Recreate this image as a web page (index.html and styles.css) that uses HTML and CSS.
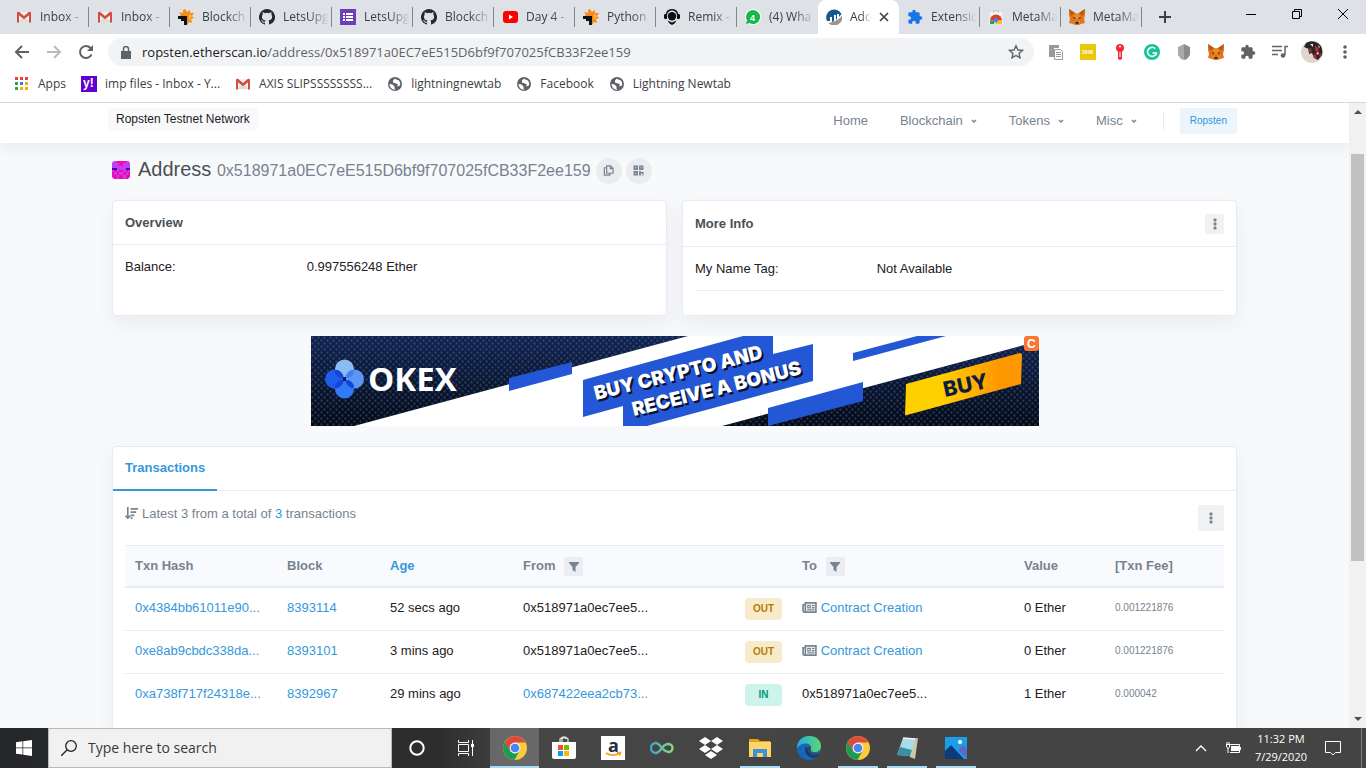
FILE: index.html
```html
<!DOCTYPE html>
<html lang="en">
<head>
<meta charset="utf-8">
<title>Address 0x518971a0EC7eE515D6bf9f707025fCB33F2ee159</title>
<link rel="stylesheet" href="styles.css">
</head>
<body>
<svg class="sprite" aria-hidden="true">
  <symbol id="gmail" viewBox="0 0 16 16"><path fill="#f2f2f2" d="M2 3h12v10H2z"/><path fill="#dcdcdc" d="M8 8l6 5H2z"/><path fill="#d54b3d" d="M1 13.500h2V6.200l5 4 5-4v7.300h2V4a1.400 1.400 0 0 0-2.300-1L8 7 3.300 3A1.400 1.400 0 0 0 1 4z"/></symbol>
  <symbol id="letsup" viewBox="0 0 16 16"><path fill="#f58a1f" d="M7 0l2 3 3-2v3l4 0-2 3 2 2-3 1 1 4-3-1-2 3-1-3H7V8H0l3-2-2-3 4 1 0-3z"/><path fill="#ffc235" d="M11 5l3 2-3 4z"/><path fill="#111" d="M0 7h9v9H6v-4H3v-2H0z"/></symbol>
  <symbol id="github" viewBox="0 0 16 16"><path fill="#24292e" d="M8 0a8 8 0 0 0-2.530 15.590c.4.070.550-.170.550-.380v-1.490c-2.010.370-2.530-.490-2.690-.940-.090-.230-.480-.940-.820-1.130-.280-.150-.680-.520-.010-.530.630-.010 1.080.580 1.230.820.720 1.210 1.870.870 2.330.660.070-.520.280-.870.510-1.070-1.780-.200-3.640-.890-3.640-3.950 0-.870.310-1.590.820-2.150-.080-.200-.360-1.020.080-2.120 0 0 .670-.210 2.200.820a7.600 7.600 0 0 1 4 0c1.530-1.040 2.200-.820 2.200-.820.440 1.100.160 1.920.080 2.120.510.560.820 1.270.820 2.150 0 3.070-1.870 3.750-3.650 3.950.290.250.540.730.540 1.480v2.200c0 .210.150.460.550.380A8 8 0 0 0 8 0z"/></symbol>
  <symbol id="form" viewBox="0 0 16 16"><path fill="#6b3fb8" d="M0 0h16v16H0z"/><path fill="#fff" d="M3 4h2v2H3zm3 0h7v2H6zM3 7h2v2H3zm3 0h7v2H6zM3 10h2v2H3zm3 0h7v2H6z"/></symbol>
  <symbol id="youtube" viewBox="0 0 16 16"><rect x="1" y="2" width="15" height="12" rx="3" fill="#f00"/><path fill="#fff" d="M7 5.500v5L11 8z"/></symbol>
  <symbol id="remix" viewBox="0 0 16 16"><path fill="#111" d="M8 0a6.500 6.500 0 0 0-6.300 5A2.500 2.500 0 0 0 1.500 10H3V6.500a5 5 0 0 1 10 0V10h1.500a2.500 2.500 0 0 0-.2-5A6.500 6.500 0 0 0 8 0z"/><circle cx="8" cy="7.300" r="4.200" fill="#111"/><path fill="#111" d="M3.500 11.500L8 13.500l4.500-2-2 3L8 16l-2.500-1.500z"/></symbol>
  <symbol id="etherscan" viewBox="0 0 16 16"><path fill="#15598c" d="M1 12A8 8 0 1 1 15.500 5L13 8V5h-2v5l-1 1V6H8v6l-2 1V8H4v4z"/><path fill="#979695" d="M2.500 14C8 13 13 11 16 6.500A8 8 0 0 1 2.500 14z"/></symbol>
  <symbol id="puzzle" viewBox="0 0 24 24"><path d="M20.500 11H19V7a2 2 0 0 0-2-2h-4V3.500a2.500 2.500 0 0 0-5 0V5H4a2 2 0 0 0-2 2v3.800h1.500a2.700 2.700 0 0 1 0 5.400H2V20a2 2 0 0 0 2 2h3.800v-1.500a2.700 2.700 0 0 1 5.400 0V22H17a2 2 0 0 0 2-2v-4h1.500a2.500 2.500 0 0 0 0-5z"/></symbol>
  <symbol id="webstore" viewBox="0 0 16 16"><path fill="#f4f5f6" d="M2 3h12l1 12H1z"/><path fill="none" stroke="#c6c9cd" d="M5.500 4V1.500h5V4"/><path fill="#e33b2e" d="M2 11.500a6 6 0 0 1 12 0z"/><path fill="#2f9e4f" d="M2 11.500h5L6 15H2z"/><path fill="#fbc116" d="M14 11.500H9L7 15h7z"/><path fill="#4285f4" d="M5.500 11.500a2.500 2.500 0 0 1 5 0L8 14z"/></symbol>
  <symbol id="fox" viewBox="0 0 16 16"><path fill="#e2761b" d="M0 0l6 4h4l6-4v6l-1 4 1 4-4 1-2 1H6l-2-1-4-1 1-4-1-4z"/><path fill="#b85a14" d="M0 0l6 4-4 3zM16 0l-6 4 4 3z"/><path fill="#f08b2d" d="M6 4h4l1 6H5z"/><path fill="#3b2b20" d="M4 8l3 1-2 1zM12 8l-3 1 2 1zM6 13h4l-1 2H7z"/><path fill="#d7c1b3" d="M5 12l1 1-1 1zm6 0l-1 1 1 1z"/></symbol>
  <symbol id="globe" viewBox="0 0 16 16"><circle cx="8" cy="8" r="7" fill="#5f6368"/><path fill="#fff" d="M8 2.500l-2 2v2l3 1 2 1-1 2 3-1c1-3-1-6-4-6zM2.500 8l3 .500 2 2v2l1 1.200C5 14 2.500 11 2.500 8z"/></symbol>
  <symbol id="chrome" viewBox="0 0 22 22"><circle cx="11" cy="11" r="11" fill="#fbcb3c"/><path fill="#de4b3c" d="M1.500 5.500a11 11 0 0 1 19 0L20.800 6H11L6 14z"/><path fill="#1c9b55" d="M1.500 5.500A11 11 0 0 0 10.500 22L15.500 13 11 16 6.500 14z"/><circle cx="11" cy="11" r="5" fill="#f5f5f5"/><circle cx="11" cy="11" r="4" fill="#4a86f0"/></symbol>
  <symbol id="dots" viewBox="0 0 16 16"><circle cx="8" cy="3" r="1.800"/><circle cx="8" cy="8" r="1.800"/><circle cx="8" cy="13" r="1.800"/></symbol>
  <symbol id="dots-tight" viewBox="0 0 12 12"><rect x="4.500" y="0.500" width="3" height="3" rx="1"/><rect x="4.500" y="4.500" width="3" height="3" rx="1"/><rect x="4.500" y="8.500" width="3" height="3" rx="1"/></symbol>
  <symbol id="funnel" viewBox="0 0 10 10"><path d="M0 0h10v1L6.500 5v5L3.500 8V5L0 1z"/></symbol>
  <symbol id="caret" viewBox="0 0 6 6"><path fill="none" stroke="currentColor" stroke-width="1.400" d="M1 2l2 2 2-2"/></symbol>
  <symbol id="news" viewBox="0 0 16 12"><path fill="none" stroke="currentColor" stroke-width="1.800" d="M3.500 1H15v10H2A1.300 1.300 0 0 1 1 10V3h2.500zM3.500 3v7"/><path fill="currentColor" d="M5.500 3h4v4h-4zM10.500 3h3v1.500h-3zM10.500 5.500h3V7h-3zM5.500 8h8v1.200h-8z"/><path fill="#fff" d="M6.700 4.300h1.500v1.400H6.700z"/></symbol>
</svg>

<header class="tabs">
  <div class="tab"><svg class="i16"><use href="#gmail"/></svg><span class="title">Inbox -</span></div>
  <div class="tab"><svg class="i16"><use href="#gmail"/></svg><span class="title">Inbox -</span></div>
  <div class="tab"><svg class="i16"><use href="#letsup"/></svg><span class="title">Blockch</span></div>
  <div class="tab"><svg class="i16"><use href="#github"/></svg><span class="title">LetsUpg</span></div>
  <div class="tab"><svg class="i16"><use href="#form"/></svg><span class="title">LetsUpg</span></div>
  <div class="tab"><svg class="i16"><use href="#github"/></svg><span class="title">Blockch</span></div>
  <div class="tab"><svg class="i16"><use href="#youtube"/></svg><span class="title">Day 4 -</span></div>
  <div class="tab"><svg class="i16"><use href="#letsup"/></svg><span class="title">Python</span></div>
  <div class="tab"><svg class="i16"><use href="#remix"/></svg><span class="title">Remix -</span></div>
  <div class="tab before-active"><svg class="i16" viewBox="0 0 16 16"><circle cx="8" cy="8" r="8" fill="#fff"/><path fill="#14b84c" d="M8 1a7 7 0 0 0-6 10.500L1 15l3.500-1A7 7 0 1 0 8 1z"/><text x="5" y="12" class="wa-count">4</text></svg><span class="title">(4) Wha</span></div>
  <div class="tab active"><svg class="i16"><use href="#etherscan"/></svg><span class="title">Add</span><button class="close" aria-label="Close tab"><svg viewBox="0 0 10 10"><path d="M1 1l8 8M9 1L1 9"/></svg></button></div>
  <div class="tab"><svg class="i16 blue"><use href="#puzzle"/></svg><span class="title">Extensic</span></div>
  <div class="tab"><svg class="i16"><use href="#webstore"/></svg><span class="title">MetaMa</span></div>
  <div class="tab"><svg class="i16"><use href="#fox"/></svg><span class="title">MetaMa</span></div>
  <button class="new-tab" aria-label="New tab"><svg viewBox="0 0 12 12"><path d="M6 0v12M0 6h12"/></svg></button>
  <div class="window-buttons">
    <button aria-label="Minimize"><svg viewBox="0 0 10 10"><path d="M0 5.500h10"/></svg></button>
    <button aria-label="Restore"><svg viewBox="0 0 10 10"><path d="M.5 2.500h7v7h-7zM2.500 2.500v-2h7v7h-2"/></svg></button>
    <button aria-label="Close"><svg viewBox="0 0 10 10"><path d="M0 0l10 10M10 0L0 10"/></svg></button>
  </div>
</header>

<nav class="toolbar">
  <button aria-label="Back"><svg class="nav" viewBox="0 0 16 16"><path d="M15 8H2M8 2L2 8l6 6"/></svg></button>
  <button aria-label="Forward"><svg class="nav faint" viewBox="0 0 16 16"><path d="M1 8h13M8 2l6 6-6 6"/></svg></button>
  <button aria-label="Reload"><svg class="nav" viewBox="0 0 16 16"><path d="M13.500 10.500A6 6 0 1 1 12.500 4L14 5.500"/><path class="solid" d="M15 1v6H9z"/></svg></button>
  <div class="omnibox">
    <svg class="lock" viewBox="0 0 10 13"><path fill="#5f6368" d="M0 5h10v8H0z"/><path fill="none" stroke="#5f6368" stroke-width="1.500" d="M2.500 5V3a2.500 2.500 0 0 1 5 0v2"/></svg>
    <div class="url" role="textbox" aria-label="Address bar" contenteditable="true" spellcheck="false"><span class="host">ropsten.etherscan.io</span>/address/0x518971a0EC7eE515D6bf9f707025fCB33F2ee159</div>
    <button aria-label="Bookmark this page"><svg class="i16" viewBox="0 0 16 16"><path fill="none" stroke="#5f6368" stroke-width="1.400" d="M8 1.800l1.900 4.200 4.500.400-3.400 3 1 4.500L8 11.500 4 13.900l1-4.500-3.400-3 4.500-.400z"/></svg></button>
  </div>
  <div class="extensions">
    <button aria-label="Clipboard"><svg class="i16" viewBox="0 0 16 16"><path fill="#9a9a9a" d="M1 1h10v3H6v9H1z"/><path fill="#fff" stroke="#9a9a9a" d="M6.500 5.500h6l2 2v8h-8z"/><path stroke="#9a9a9a" d="M8 8.500h5M8 10.500h5M8 12.500h5"/></svg></button>
    <button aria-label="2048"><svg class="i16" viewBox="0 0 16 16"><rect width="16" height="16" rx="1" fill="#edc60a"/><text x="2" y="10" class="t2048">2048</text></svg></button>
    <button aria-label="Key"><svg class="i16" viewBox="0 0 16 16"><circle cx="8" cy="4" r="4" fill="#ee2c3c"/><path fill="#ee2c3c" d="M6 6h4v9l-2 1-2-1z"/><circle cx="8" cy="2.500" r="1" fill="#fff"/><path stroke="#fff" d="M8 8v5"/></svg></button>
    <button aria-label="Grammarly"><svg class="i16" viewBox="0 0 16 16"><circle cx="8" cy="8" r="8" fill="#15c39a"/><path fill="none" stroke="#fff" stroke-width="1.600" d="M11.300 4.700A4.500 4.500 0 1 0 12.400 9H8.500M12 8.500v3"/></svg></button>
    <button aria-label="Shield"><svg class="i16" viewBox="0 0 16 16"><path fill="#a9a9a9" d="M8 0L2 3v8l3 4 3 1z"/><path fill="#8c8c8c" d="M8 0l6 3v8l-3 4-3 1z"/></svg></button>
    <button aria-label="MetaMask"><svg class="i16"><use href="#fox"/></svg></button>
    <button aria-label="Extensions"><svg class="i16 grey"><use href="#puzzle"/></svg></button>
    <button aria-label="Media"><svg class="i16" viewBox="0 0 16 16"><path stroke="#5f6368" stroke-width="1.500" fill="none" d="M0 2.500h10M0 6.500h10M0 10.500h6M13 11V2.500h3"/><circle cx="11" cy="11.500" r="2.300" fill="#5f6368"/></svg></button>
    <button aria-label="Profile"><svg class="avatar" viewBox="0 0 22 22"><circle cx="11" cy="11" r="11" fill="#dcd6cd"/><path fill="#2a2628" d="M5 2a11 11 0 0 1 15 3q2 5 1 9l-4 5-4-2-2-5-3 1 0-5-5-2z"/><path fill="#c1262d" d="M14 5l4 2-1 4-3-1zM12 14l3-1 1 4-2 1zM18 13l3-1-2 4z"/><path fill="#e9e4e0" d="M9 3l3 0 0 3zM15 12l3-1-1 3zM17 4l2 2-1 1z"/><path fill="#7d3350" d="M7 8l3-1 1 4-3 1z"/></svg></button>
    <button class="menu" aria-label="Menu"><svg class="i16 grey"><use href="#dots"/></svg></button>
  </div>
</nav>

<nav class="bookmarks">
  <a href="#"><svg class="i16" viewBox="0 0 16 16"><path fill="#ea4335" d="M1 1h3v3H1zm5 0h3v3H6zm5 0h3v3h-3z"/><path fill="#34a04f" d="M1 6h3v3H1zm0 5h3v3H1z"/><path fill="#2a7ff0" d="M6 6h3v3H6z"/><path fill="#f9ab00" d="M11 6h3v3h-3zm-5 5h3v3H6zm5 0h3v3h-3z"/></svg>Apps</a>
  <a href="#"><svg class="i16" viewBox="0 0 16 16"><path fill="#6001d2" d="M0 0h16v16H0z"/><text x="2" y="11" class="yahoo">y!</text></svg>imp files - Inbox - Y...</a>
  <a href="#"><svg class="i16"><use href="#gmail"/></svg>AXIS SLIPSSSSSSSS...</a>
  <a href="#"><svg class="i16"><use href="#globe"/></svg>lightningnewtab</a>
  <a href="#"><svg class="i16"><use href="#globe"/></svg>Facebook</a>
  <a href="#"><svg class="i16"><use href="#globe"/></svg>Lightning Newtab</a>
</nav>

<div class="viewport">
  <div class="page">
    <header class="site-header">
      <div class="container">
        <span class="network">Ropsten Testnet Network</span>
        <nav class="site-nav">
          <a href="#">Home</a>
          <a href="#">Blockchain <svg class="caret"><use href="#caret"/></svg></a>
          <a href="#">Tokens <svg class="caret"><use href="#caret"/></svg></a>
          <a href="#">Misc <svg class="caret"><use href="#caret"/></svg></a>
          <span class="divider"></span>
          <a class="chain" href="#">Ropsten</a>
        </nav>
      </div>
    </header>

    <main class="container">
      <div class="heading">
        <svg class="identicon" viewBox="0 0 8 8" preserveAspectRatio="none" shape-rendering="crispEdges"><path fill="#c23cf5" d="M0 0h8v8H0z"/><path fill="#f507a8" d="M2 0h4v1H5v1H3V1H2zM1 4h1v1H1zm2 0h2v1H3zm3 0h1v1H6zM0 5h1v1h1v1H0zM2 5h1v1H2zm3 0h1v1H5zm2 0h1v2H6V6h1zM3 6h2v1H3zM1 7h1v1H1zm2 0h2v1H3zm3 0h1v1H6z"/><path fill="#3a0ba5" d="M0 3h2v1H0zm6 0h2v1H6z"/></svg>
        <h1>Address <span class="hash">0x518971a0EC7eE515D6bf9f707025fCB33F2ee159</span></h1>
        <button class="round" aria-label="Copy address"><svg viewBox="0 0 12 12"><path fill="none" stroke="currentColor" stroke-width="1.300" d="M4 1h4l3 2.500V9H4zM4 3H1.500v8h6V9M8 1v3h3"/></svg></button>
        <button class="round" aria-label="QR code"><svg viewBox="0 0 12 12"><path fill="none" stroke="currentColor" stroke-width="1.800" d="M1.500 1.500h3v3h-3zM7.500 1.500h3v3h-3zM1.500 7.500h3v3h-3z"/><path fill="currentColor" d="M6.600 6.600h2v1h3v2.400h-2V9h-1v2.400h-2zM10 10.500h1.500v1H10z"/></svg></button>
      </div>

      <div class="cards">
        <section class="card">
          <h2>Overview</h2>
          <dl><dt>Balance:</dt><dd>0.997556248 Ether</dd></dl>
        </section>
        <section class="card">
          <h2 class="with-menu">More Info <button class="small-dots" aria-label="More options"><svg><use href="#dots-tight"/></svg></button></h2>
          <dl class="ruled"><dt>My Name Tag:</dt><dd>Not Available</dd></dl>
        </section>
      </div>

      <a class="ad" href="#">
        <svg viewBox="0 0 728 90" role="img" aria-label="OKEX banner">
          <defs>
            <linearGradient id="night" x2="0" y2="1"><stop stop-color="#102452"/><stop offset="1" stop-color="#030916"/></linearGradient>
            <linearGradient id="gold"><stop offset=".3" stop-color="#ffd000"/><stop offset=".8" stop-color="#ff9800"/></linearGradient>
            <pattern id="mesh" width="6" height="6" patternUnits="userSpaceOnUse"><g fill="#8093b8" opacity=".28"><circle cx="1.500" cy="1.500" r="1.200"/><circle cx="4.500" cy="4.500" r="1.200"/></g></pattern>
          </defs>
          <path fill="#fff" d="M0 0h728v90H0z"/>
          <path fill="url(#night)" d="M0 0h377L43 90H0zM411 90L728 5v85z"/>
          <path fill="url(#mesh)" d="M0 0h377L43 90H0zM411 90L728 5v85z"/>
          <path fill="#2457d6" d="M198 42l63-16v12l-63 17zM272 44L432 0h30v18l40-10v37L336 90h-24V70l-40 11zM542 17l64-17h29l-93 25zM457 72l95-26v19l-95 25z"/>
          <circle cx="33.500" cy="33" r="9.500" fill="#8abcf5"/><circle cx="43.500" cy="43" r="9.500" fill="#5b96f2"/><circle cx="33.500" cy="53" r="9.500" fill="#3279f5"/><circle cx="23.500" cy="43" r="9.500" fill="#1e5cec"/>
          <g fill="#1742d8"><ellipse cx="28" cy="38" rx="5" ry="2.500" transform="rotate(45 28 38)"/><ellipse cx="39" cy="38" rx="5" ry="2.500" transform="rotate(-45 39 38)" fill="#3f82ee"/><ellipse cx="28" cy="48" rx="5" ry="2.500" transform="rotate(-45 28 48)"/><ellipse cx="39" cy="48" rx="5" ry="2.500" transform="rotate(45 39 48)"/></g>
          <path fill="#0b1c42" d="M32 41h3v4h-3z"/>
          <text class="okex" x="57" y="55">OKEX</text>
          <text class="slogan shade" transform="rotate(-14 287 66)" x="287" y="66">BUY CRYPTO AND</text>
          <text class="slogan" transform="rotate(-14 285 64)" x="285" y="64">BUY CRYPTO AND</text>
          <text class="slogan shade" transform="rotate(-14 325 82)" x="325" y="82">RECEIVE A BONUS</text>
          <text class="slogan" transform="rotate(-14 323 80)" x="323" y="80">RECEIVE A BONUS</text>
          <path fill="url(#gold)" d="M595 48l114-31q2 0 2 2l-1 29-114 31q-2 1-2-1l1-28z"/>
          <text class="buy" transform="rotate(-12 634 61)" x="634" y="61">BUY</text>
          <rect x="713" y="0" width="15" height="15" rx="3" fill="#fb7535"/>
          <text class="badge-c" x="716" y="12">C</text>
        </svg>
      </a>

      <section class="card transactions">
        <div class="tab-row"><a href="#">Transactions</a></div>
        <div class="summary">
          <p><svg class="sort" viewBox="0 0 14 14"><path fill="none" stroke="currentColor" stroke-width="1.800" d="M3 0v12M0.500 9.500L3 12l2.500-2.500M6 2h8M6 5.500h6M6 9h4M6 12h2"/></svg> <span>Latest 3 from a total of <a href="#">3</a> transactions</span></p>
          <button class="big-dots" aria-label="Table options"><svg><use href="#dots-tight"/></svg></button>
        </div>
        <table>
          <colgroup><col class="c-hash"><col class="c-block"><col class="c-age"><col class="c-from"><col class="c-dir"><col class="c-to"><col class="c-value"><col class="c-fee"></colgroup>
          <thead><tr><th>Txn Hash</th><th>Block</th><th><a href="#">Age</a></th><th>From <button class="filter" aria-label="Filter from"><svg><use href="#funnel"/></svg></button></th><th></th><th>To <button class="filter" aria-label="Filter to"><svg><use href="#funnel"/></svg></button></th><th>Value</th><th>[Txn Fee]</th></tr></thead>
          <tbody>
            <tr><td><a href="#">0x4384bb61011e90...</a></td><td><a href="#">8393114</a></td><td>52 secs ago</td><td>0x518971a0ec7ee5...</td><td><span class="dir out">OUT</span></td><td><svg class="news"><use href="#news"/></svg> <a href="#">Contract Creation</a></td><td>0 Ether</td><td class="fee">0.001221876</td></tr>
            <tr><td><a href="#">0xe8ab9cbdc338da...</a></td><td><a href="#">8393101</a></td><td>3 mins ago</td><td>0x518971a0ec7ee5...</td><td><span class="dir out">OUT</span></td><td><svg class="news"><use href="#news"/></svg> <a href="#">Contract Creation</a></td><td>0 Ether</td><td class="fee">0.001221876</td></tr>
            <tr><td><a href="#">0xa738f717f24318e...</a></td><td><a href="#">8392967</a></td><td>29 mins ago</td><td><a href="#">0x687422eea2cb73...</a></td><td><span class="dir in">IN</span></td><td>0x518971a0ec7ee5...</td><td>1 Ether</td><td class="fee">0.000042</td></tr>
          </tbody>
        </table>
      </section>
    </main>
  </div>
  <div class="scrollbar"><svg viewBox="0 0 8 4"><path d="M0 4h8L4 0z"/></svg><div class="track"><div class="thumb"></div></div><svg viewBox="0 0 8 4"><path d="M0 0h8L4 4z"/></svg></div>
</div>

<footer class="taskbar">
  <button class="start" aria-label="Start"><svg viewBox="0 0 16 16"><path fill="#fff" d="M0 2.200l6.500-.900v6.200H0zM7.200 1.200L16 0v7.500H7.200zM0 8.300h6.500v6.300L0 13.700zM7.200 8.300H16V16l-8.800-1.200z"/></svg></button>
  <label class="search"><svg viewBox="0 0 16 16"><circle cx="10" cy="6" r="5.300"/><path d="M6.200 9.800L0 16"/></svg><input type="text" placeholder="Type here to search" aria-label="Type here to search"></label>
  <button class="app" aria-label="Cortana"><svg class="i16" viewBox="0 0 16 16"><circle cx="8" cy="8" r="6.700" fill="none" stroke="#fff" stroke-width="2"/></svg></button>
  <button class="app" aria-label="Task view"><svg class="i16" viewBox="0 0 16 16"><path fill="none" stroke="#fff" d="M.5 4.500h10v7H.5zM.5 0v2.500h10V0M.5 16v-2.500h10V16M14.500 0v16"/><path fill="#fff" d="M13 4h3v3h-3z"/></svg></button>
  <button class="app current" aria-label="Chrome"><svg><use href="#chrome"/></svg></button>
  <button class="app" aria-label="Store"><svg viewBox="0 0 24 24"><path fill="none" stroke="#ddd" stroke-width="1.300" d="M8 6V3q4-4 8 0v3M10 6V3q3-3 4 0"/><path fill="#fff" d="M0 6h24v15q0 2-2 2H2q-2 0-2-2z"/><path fill="#f25022" d="M6 9h5v5H6z"/><path fill="#7fba00" d="M12 9h5v5h-5z"/><path fill="#00a4ef" d="M6 15h5v5H6z"/><path fill="#ffb900" d="M12 15h5v5h-5z"/></svg></button>
  <button class="app" aria-label="Amazon"><svg viewBox="0 0 24 24"><path fill="#fff" d="M0 0h24v24H0z"/><text x="7" y="16" class="amazon">a</text><path fill="none" stroke="#f79a1e" stroke-width="1.500" d="M5 17q7 4.500 14 0M16 16.500l3.500 0-1 3"/></svg></button>
  <button class="app" aria-label="Infinity"><svg viewBox="0 0 24 24"><defs><linearGradient id="inf"><stop stop-color="#3fa3cf"/><stop offset="1" stop-color="#8fd67c"/></linearGradient></defs><path fill="none" stroke="url(#inf)" stroke-width="2.400" d="M12 12C9 16 8 17 6 17a5 5 0 0 1 0-10c3 0 4 3 6 5s3 4 6.500 4a4 4 0 0 0 0-8C16 8 14 9 12 12z"/></svg></button>
  <button class="app" aria-label="Dropbox"><svg viewBox="0 0 24 24"><path fill="#fff" d="M6 1l6 4-6 4-6-4zM18 1l6 4-6 4-6-4zM6 9l6 4-6 4-6-4zM18 9l6 4-6 4-6-4zM12 15l6 4-6 4-6-4z"/></svg></button>
  <button class="app open" aria-label="File Explorer"><svg viewBox="0 0 24 24"><path fill="#e2a50f" d="M1 3h9l2 2h10v4H1z"/><path fill="#fcd569" d="M1 6h22v15H1z"/><path fill="#3f92d9" d="M5 13h14v8h-4v-4H9v4H5z"/></svg></button>
  <button class="app" aria-label="Edge"><svg viewBox="0 0 24 24"><defs><linearGradient id="edge"><stop stop-color="#2aa8e8"/><stop offset="1" stop-color="#58d96b"/></linearGradient></defs><circle cx="12" cy="12" r="12" fill="#1767b7"/><path fill="url(#edge)" d="M0 12C0 5 5 0 12 0c8 0 12 5 12 10 0 4-3 6-6 6-4 0-5-2-4-4 1-5-9-7-14 0z"/><path fill="#0d3e87" d="M9 10c-3 5 1 12 8 12 3 0 5-3 5-4-5 3-11 0-11-5z"/><path fill="#444" d="M11 11q3-2 3 1-2 5 4 5.500 3 0 5-1.500l-2 3q-7 2-10-4z"/></svg></button>
  <button class="app open" aria-label="Chrome, second window"><svg><use href="#chrome"/></svg></button>
  <button class="app open" aria-label="Notepad"><svg viewBox="0 0 24 24"><path fill="#cfc6a8" d="M9 3l14-1-3 21-5-2z"/><path fill="#a9dbe8" d="M8 2l12 1-4 17-14-1z"/><path fill="#3a8fa0" d="M5 11l12 3-2 6-13-1z"/><path stroke="#f4f4f4" stroke-width="1.500" d="M8 2l12 1"/></svg></button>
  <button class="app open" aria-label="Photos"><svg viewBox="0 0 24 24"><path fill="#1b9fea" d="M1 1h22v22H1z"/><path fill="#5a68c8" d="M14 14l5-5 4 4v10z"/><path fill="#0d3a78" d="M1 15l6-6 13 14H1z"/><circle cx="16" cy="6" r="2" fill="#fff"/></svg></button>
  <div class="tray">
    <button aria-label="Show hidden icons"><svg class="up" viewBox="0 0 12 7"><path fill="none" stroke="#fff" stroke-width="1.300" d="M1 6l5-5 5 5"/></svg></button>
    <svg class="i16" viewBox="0 0 16 16"><path fill="#fff" d="M6 6h8v5H6z"/><path fill="none" stroke="#fff" d="M4.500 4.500h10v8H5M15.500 7v3M1 4.500h4M1.500 5v2q2 3 3 0V5M3 8v5M2 2v2M4 2v2"/></svg>
    <div class="clock"><span>11:32 PM</span><span>7/29/2020</span></div>
    <button aria-label="Notifications"><svg class="i16" viewBox="0 0 16 16"><path fill="none" stroke="#fff" d="M.5 1.500h15v11h-5L8 15l-2.500-2.500h-5z"/></svg></button>
    <span class="desktop-edge"></span>
  </div>
</footer>
</body>
</html>
```
FILE: styles.css
```css
* { box-sizing: border-box; }
body {
  margin: 0;
  height: 100vh;
  display: flex;
  flex-direction: column;
  overflow: hidden;
  font: 12px/16px "Open Sans", "Noto Sans", sans-serif;
  color: #3c4043;
  background: #fff;
}
button {
  border: 0;
  margin: 0;
  padding: 0;
  background: none;
  color: inherit;
  font: inherit;
  display: flex;
  align-items: center;
  justify-content: center;
  flex: none;
}
a { text-decoration: none; color: inherit; }
svg { flex: none; display: block; }
.sprite { position: absolute; width: 0; height: 0; }
.i16 { width: 16px; height: 16px; }
.blue { fill: #1a73e8; }
.grey { fill: #5f6368; }

/* Browser tabs */
.tabs { display: flex; height: 34px; flex: none; padding-left: 8px; background: #dee1e6; }
.tab { display: flex; align-items: center; gap: 8px; flex: 0 1 81px; min-width: 0; padding: 0 3px 0 8px; position: relative; }
.tab::after { content: ""; position: absolute; right: 0; top: 7px; width: 1px; height: 20px; background: #80868b; }
.tab.active::after, .tab.before-active::after { display: none; }
.title { flex: 1; min-width: 0; white-space: nowrap; mask-image: linear-gradient(90deg, #000 55%, transparent); }
.tab.active { background: #fff; border-radius: 8px 8px 0 0; padding-right: 10px; }
.close svg { width: 10px; height: 10px; stroke: #3c4043; stroke-width: 1.6; }
.new-tab { width: 46px; }
.new-tab svg { width: 12px; height: 12px; stroke: #3c4043; stroke-width: 2; }
.window-buttons { display: flex; margin-left: auto; height: 28px; }
.window-buttons button { width: 46px; }
.window-buttons svg { width: 10px; height: 10px; fill: none; stroke: #000; }
.wa-count { font: bold 9px "Liberation Sans", sans-serif; fill: #fff; }

/* Toolbar */
.toolbar { display: flex; align-items: center; height: 36px; flex: none; padding: 0 4px 0 6px; }
.toolbar > button { width: 32px; height: 32px; }
.nav { width: 16px; height: 16px; fill: none; stroke: #5f6368; stroke-width: 2; }
.nav .solid { fill: #5f6368; stroke: none; }
.faint { stroke: #b9bbbe; }
.omnibox { display: flex; align-items: center; flex: 1; height: 28px; min-width: 0; margin-left: 6px; padding: 0 10px 0 13px; border-radius: 14px; background: #f1f3f4; }
.lock { width: 10px; height: 13px; }
.url { flex: 1; min-width: 0; overflow: hidden; white-space: nowrap; padding-left: 11px; font-size: 13px; line-height: 20px; color: #5f6368; }
.host { color: #202124; }
.extensions { display: flex; align-items: center; margin-left: 6px; }
.extensions button { width: 32px; height: 28px; }
.extensions .menu { width: 34px; }
.avatar { width: 22px; height: 22px; }
.t2048 { font: bold 5px "Liberation Sans", sans-serif; fill: #fff; }

/* Bookmarks */
.bookmarks { display: flex; align-items: center; gap: 15px; height: 33px; flex: none; padding: 0 14px 4px; border-bottom: 1px solid #d5d7da; white-space: nowrap; }
.bookmarks a { display: flex; align-items: center; gap: 8px; }
.yahoo { font: bold 12px "Liberation Sans", sans-serif; fill: #fff; }

/* Page */
.viewport { display: flex; flex: 1; min-height: 0; }
.page { flex: 1; min-width: 0; overflow: hidden; background: #f8f9fb; color: #1e2022; font: 13px/20px "Liberation Sans", Arial, sans-serif; }
.page a { color: #3498db; }
.container { width: 100%; max-width: 1125px; margin: 0 auto; }
.site-header { background: #fff; box-shadow: 0 6px 14px rgba(140, 152, 164, .12); }
.site-header .container { display: flex; justify-content: space-between; align-items: flex-start; height: 40px; padding-top: 5px; }
.network { margin-left: -4px; padding: 3px 8px; border-radius: 4px; background: #f8f9fa; font-size: 12px; line-height: 16px; }
.site-nav { display: flex; align-items: center; height: 26px; gap: 32px; }
.page .site-nav a { display: flex; align-items: center; gap: 8px; color: #77838f; }
.caret { width: 6px; height: 6px; }
.site-nav .divider { width: 1px; height: 20px; margin: 0 -16px 0 -6px; background: #e7eaf3; }
.page .site-nav .chain { padding: 0 10px; height: 26px; border-radius: 2px; background: #ebf5fb; color: #3498db; font-size: 10px; }

.heading { display: flex; align-items: center; height: 57px; padding-bottom: 3px; }
.identicon { width: 18px; height: 18px; border-radius: 3px; }
h1 { margin: 0 5px 0 8px; font-size: 20px; line-height: 24px; font-weight: 400; color: #4a4f55; white-space: nowrap; }
.hash { font-size: 16px; color: #77838f; }
.round { width: 26px; height: 26px; margin: 1px 4px 0 0; border-radius: 50%; background: #ebecf0; color: #77838f; }
.round svg { width: 11px; height: 11px; }

.cards { display: grid; grid-template-columns: 1fr 1fr; gap: 15px; }
.card { border: 1px solid #e7eaf3; border-radius: 4px; background: #fff; box-shadow: 0 8px 20px rgba(140, 152, 164, .13); }
.card h2 { margin: 0; padding: 12px; border-bottom: 1px solid #e7eaf3; font-size: 13px; line-height: 19px; color: #4a4f55; }
.card .with-menu { display: flex; align-items: center; justify-content: space-between; padding: 13px 12px 12px; line-height: 20px; }
.small-dots { width: 19px; height: 20px; border-radius: 2px; background: #f0f1f3; fill: #77838f; }
.small-dots svg, .big-dots svg { width: 12px; height: 12px; }
dl { display: grid; grid-template-columns: 1fr 2fr; column-gap: 8px; margin: 0 12px; padding: 12px 0; }
dd { margin: 0; }
dl.ruled { border-bottom: 1px solid #e7eaf3; margin-bottom: 24px; padding-bottom: 11px; }

.ad { display: block; max-width: 728px; margin: 20px auto; }
.ad svg { width: 100%; }
.okex { font: 700 33px "Open Sans", sans-serif; fill: #fff; }
.slogan { font: 900 19px Inter, sans-serif; fill: #fff; }
.slogan.shade { fill: #06122e; }
.buy { font: 800 21px Inter, sans-serif; fill: #0b1c42; }
.badge-c { font: bold 12px "Liberation Sans", sans-serif; fill: #fff; }

.tab-row { display: flex; height: 44px; border-bottom: 1px solid #e7eaf3; }
.tab-row a { height: 44px; padding: 11px 12px; border-bottom: 2px solid #3498db; font-weight: 700; }
.summary { display: flex; justify-content: space-between; padding: 14px 12px; }
.summary p { display: flex; gap: 4px; margin: -1px 0 0; color: #77838f; }
.sort { width: 13px; height: 13px; margin-top: 3px; }
.big-dots { width: 26px; height: 26px; border-radius: 2px; background: #f0f1f3; fill: #77838f; }
.transactions { min-height: 320px; }
table { width: calc(100% - 24px); margin: 0 12px; table-layout: fixed; border-collapse: separate; border-spacing: 0; }
.c-hash { width: 152px; }
.c-block { width: 103px; }
.c-age { width: 133px; }
.c-from, .c-to { width: 222px; }
.c-dir { width: 57px; }
.c-value { width: 91px; }
.c-fee { width: 119px; }
th, td { padding: 0 10px; text-align: left; white-space: nowrap; }
th { height: 43px; border-top: 1px solid #e7eaf3; border-bottom: 2px solid #e7eaf3; background: #f8fafd; color: #77838f; }
td { height: 43px; border-bottom: 1px solid #e7eaf3; padding-bottom: 2px; }
tr:last-child td { border-bottom-color: transparent; }
.filter { display: inline-flex; width: 19px; height: 19px; margin-left: 5px; border-radius: 2px; background: #ebedf2; fill: #77838f; vertical-align: middle; }
.filter svg { width: 10px; height: 10px; }
.news { display: inline-block; width: 15px; height: 11px; color: #77838f; vertical-align: -1px; }
.dir { display: block; width: 37px; margin-top: 2px; border-radius: 4px; font-size: 10px; font-weight: 700; line-height: 22px; text-align: center; }
.out { background: #f8ebcb; color: #b47d00; }
.in { background: #ccf4ea; color: #02977e; }
.fee { font-size: 10px; color: #77838f; }

.scrollbar { display: flex; flex-direction: column; align-items: center; justify-content: space-between; width: 17px; padding: 7px 0; background: #f1f1f1; flex: none; }
.scrollbar svg { width: 8px; height: 4px; fill: #505050; }
.track { flex: 1; width: 13px; padding: 40px 0 156px; display: flex; }
.thumb { flex: 1; background: #c1c1c1; }

/* Taskbar */
.taskbar { display: flex; height: 40px; flex: none; background: linear-gradient(90deg, #25272b, #2d2d2e 32%, #454545 38%, #444); color: #fff; }
.start { width: 48px; }
.start svg { width: 16px; height: 16px; }
.search { display: flex; align-items: center; gap: 11px; flex: 0 1 344px; min-width: 0; padding-left: 12px; border: 1px solid #b9b9b9; background: #f1f1f1; }
.search svg { width: 16px; height: 16px; fill: none; stroke: #222; stroke-width: 1.3; }
.search input { flex: 1; min-width: 0; padding: 0; border: 0; outline: 0; background: none; font: 14px/20px "Open Sans", sans-serif; }
.search input::placeholder { color: #3a3a3a; opacity: 1; }
.app { width: 49px; }
.app svg:not(.i16) { width: 24px; height: 24px; }
.app.current { background: #686868; border-bottom: 2px solid #a6dcf5; border-top: 2px solid #686868; }
.app.open { background: linear-gradient(#a6dcf5, #a6dcf5) bottom / 40px 2px no-repeat; }
.amazon { font: bold 18px "Open Sans", sans-serif; fill: #232f3e; }
.tray { display: flex; align-items: center; margin-left: auto; gap: 18px; }
.up { width: 12px; height: 7px; }
.clock { display: flex; flex-direction: column; align-items: center; margin: 0 0 0 -4px; font-size: 11px; line-height: 18px; }
.desktop-edge { width: 5px; height: 40px; margin-left: 2px; border-left: 1px solid #808080; }
```
